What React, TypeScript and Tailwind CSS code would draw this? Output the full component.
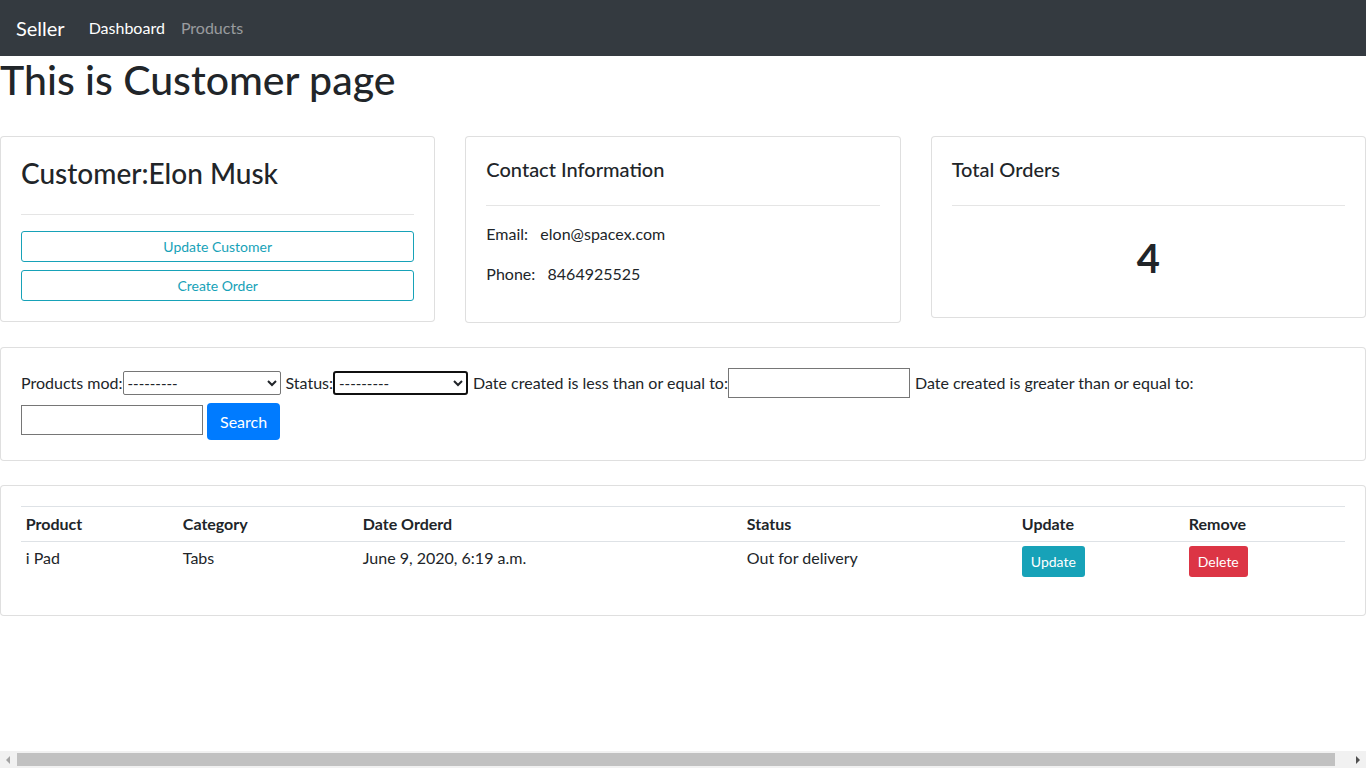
import React from "react";

const Card: React.FC<{ className?: string; children: React.ReactNode }> = ({ className = "", children }) => (
  <div className={`flex flex-col border border-black/[0.125] rounded-[4px] bg-white p-5 ${className}`}>{children}</div>
);

const Hr = () => <hr className="my-4 border-0 border-t border-black/10" />;

const App: React.FC = () => {
  return (
    <div className="min-h-screen bg-white text-[#212529] text-[16px] leading-[1.5] font-['Segoe_UI',Lato,'Liberation_Sans',sans-serif]">
      <nav className="flex items-center h-14 px-4 bg-[#343a40]">
        <span className="text-[20px] text-white mr-4">Seller</span>
        <a className="px-2 text-white">Dashboard</a>
        <a className="px-2 text-white/50">Products</a>
      </nav>

      <h1 className="text-[41px] font-medium leading-[48px]">This is Customer page</h1>

      <div className="-mx-[15px] mt-8 flex items-start">
        <div className="w-1/3 px-[15px]">
          <Card>
            <h3 className="text-[28px] font-medium leading-[33px] mb-2">Customer:Elon Musk</h3>
            <Hr />
            <button className="block w-full h-[31px] border border-[#17a2b8] rounded-[3px] text-[#17a2b8] text-[14px]">
              Update Customer
            </button>
            <button className="block w-full h-[31px] mt-2 border border-[#17a2b8] rounded-[3px] text-[#17a2b8] text-[14px]">
              Create Order
            </button>
          </Card>
        </div>
        <div className="w-1/3 px-[15px]">
          <Card>
            <h5 className="text-[20px] font-medium leading-[1.2] mb-2">Contact Information</h5>
            <Hr />
            <p className="mb-4">Email:&nbsp;&nbsp; elon@spacex.com</p>
            <p className="mb-4">Phone:&nbsp;&nbsp; 8464925525</p>
          </Card>
        </div>
        <div className="w-1/3 px-[15px]">
          <Card>
            <h5 className="text-[20px] font-medium leading-[1.2] mb-2">Total Orders</h5>
            <Hr />
            <h1 className="text-[40px] font-bold leading-[1.2] text-center pt-3 mb-[15px]">4</h1>
          </Card>
        </div>
      </div>

      <div className="-mx-[15px] px-[15px] mt-6">
        <Card>
          <div className="flex items-center h-[30px] whitespace-nowrap">
            <span>Products mod:</span>
            <select className="w-[158px] h-[24px] border border-[#767676] rounded-[2px] text-[15px] bg-white">
              <option>---------</option>
            </select>
            <span className="ml-[5px]">Status:</span>
            <select className="w-[135px] h-[24px] border-2 border-[#101010] rounded-[3px] text-[15px] bg-white">
              <option>---------</option>
            </select>
            <span className="ml-[5px]">Date created is less than or equal to:</span>
            <input className="w-[182px] h-[30px] border border-[#767676] px-[2px]" />
            <span className="ml-[5px]">Date created is greater than or equal to:</span>
          </div>
          <div className="flex items-start gap-1 mt-[5px]">
            <input className="w-[182px] h-[30px] mt-[2px] border border-[#767676] px-[2px]" />
            <button className="h-[37px] px-[13px] bg-[#007bff] text-white rounded-[4px]">Search</button>
          </div>
        </Card>
      </div>

      <div className="-mx-[15px] px-[15px] mt-6">
        <Card>
          <table className="w-full border-collapse mb-[13px]">
            <thead>
              <tr className="border-t border-b border-[#dee2e6]">
                <th className="w-[157px] p-[4.8px] text-left font-bold">Product</th>
                <th className="w-[180px] p-[4.8px] text-left font-bold">Category</th>
                <th className="w-[384px] p-[4.8px] text-left font-bold">Date Orderd</th>
                <th className="w-[275px] p-[4.8px] text-left font-bold">Status</th>
                <th className="w-[167px] p-[4.8px] text-left font-bold">Update</th>
                <th className="p-[4.8px] text-left font-bold">Remove</th>
              </tr>
            </thead>
            <tbody>
              <tr>
                <td className="p-[4.8px] align-top">i Pad</td>
                <td className="p-[4.8px] align-top">Tabs</td>
                <td className="p-[4.8px] align-top">June 9, 2020, 6:19 a.m.</td>
                <td className="p-[4.8px] align-top">Out for delivery</td>
                <td className="p-[4.8px] align-top">
                  <button className="h-[31px] px-[9px] bg-[#17a2b8] text-white text-[14px] rounded-[3px]">Update</button>
                </td>
                <td className="p-[4.8px] align-top">
                  <button className="h-[31px] px-[9px] bg-[#dc3545] text-white text-[14px] rounded-[3px]">Delete</button>
                </td>
              </tr>
            </tbody>
          </table>
        </Card>
      </div>

      {/* browser horizontal scrollbar, drawn since the page is 15px wider than the window */}
      <div className="fixed bottom-0 left-0 right-0 h-[17px] bg-[#f1f1f1] flex items-center">
        <span className="w-[17px] flex justify-center">
          <svg width="5" height="8" viewBox="0 0 5 8"><path d="M4 0 L0 4 L4 8 Z" fill="#a3a3a3" /></svg>
        </span>
        <div className="flex-1 h-[13px] bg-[#c1c1c1]" />
        <span className="w-[31px] flex justify-end pr-[6px]">
          <svg width="5" height="8" viewBox="0 0 5 8"><path d="M1 0 L5 4 L1 8 Z" fill="#505050" /></svg>
        </span>
      </div>
    </div>
  );
};

export default App;
